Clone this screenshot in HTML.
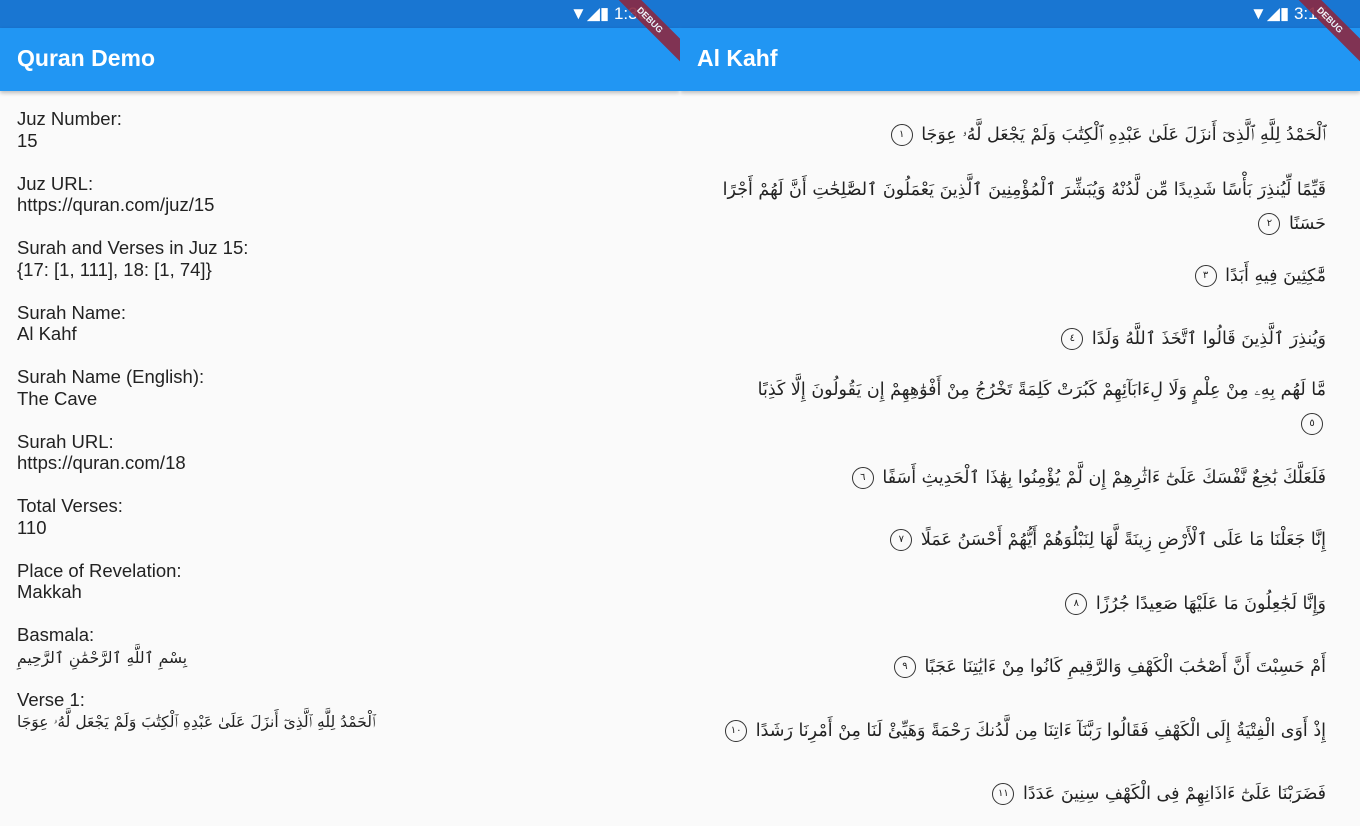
<!DOCTYPE html>
<html><head><meta charset="utf-8">
<style>
*{margin:0;padding:0;box-sizing:border-box}
body{width:1360px;height:826px;overflow:hidden;background:#fafafa;font-family:"Liberation Sans",sans-serif;position:relative}
.panel{position:absolute;top:0;width:680px;height:826px;overflow:hidden;background:#fafafa}
.sb{height:28px;background:#1976d2;position:relative}
.ab{height:63px;background:#2196f3;color:#fff;font-size:23px;font-weight:bold;padding:17px 0 0 17px;box-shadow:0 2px 4px rgba(0,0,0,.25);position:relative;z-index:2}
.icons{position:absolute;top:4px;color:#fff;font-size:17px}
.ribbon{position:absolute;top:12px;right:-30px;width:120px;height:16px;background:#8b2942;color:#fff;font-size:9px;font-weight:bold;text-align:center;line-height:16px;transform:rotate(45deg);z-index:5;opacity:.9}
.left{padding:17px 0 0 17px;color:#222;font-size:18.5px;line-height:21.5px}
.left .g{height:64.5px}
.ar{font-family:"DejaVu Sans",sans-serif;font-size:15.5px;direction:rtl;text-align:left;display:inline-block}
.right{position:absolute;top:91px;left:0;width:680px;direction:rtl;text-align:right;font-family:"DejaVu Sans",sans-serif;font-size:17.5px;color:#222}
.v{position:absolute;right:34px;left:0;line-height:34px;white-space:nowrap}
.m{display:inline-block;width:22px;height:22px;border:1.3px solid #333;border-radius:50%;font-size:10px;line-height:19px;text-align:center;vertical-align:middle;margin:0 3px}
</style></head><body>
<div class="panel" style="left:0">
<div class="sb"><div class="icons" style="left:570px">▼◢▮ 1:30</div></div>
<div class="ab">Quran Demo</div>
<div class="ribbon">DEBUG</div>
<div class="left">
<div class="g">Juz Number:<br>15</div>
<div class="g">Juz URL:<br>https://quran.com/juz/15</div>
<div class="g">Surah and Verses in Juz 15:<br>{17: [1, 111], 18: [1, 74]}</div>
<div class="g">Surah Name:<br>Al Kahf</div>
<div class="g">Surah Name (English):<br>The Cave</div>
<div class="g">Surah URL:<br>https://quran.com/18</div>
<div class="g">Total Verses:<br>110</div>
<div class="g">Place of Revelation:<br>Makkah</div>
<div class="g">Basmala:<br><span class="ar">بِسْمِ ٱللَّهِ ٱلرَّحْمَٰنِ ٱلرَّحِيمِ</span></div>
<div class="g">Verse 1:<br><span class="ar">ٱلْحَمْدُ لِلَّهِ ٱلَّذِىٓ أَنزَلَ عَلَىٰ عَبْدِهِ ٱلْكِتَٰبَ وَلَمْ يَجْعَل لَّهُۥ عِوَجَا</span></div>
</div>
</div>
<div class="panel" style="left:680px">
<div class="sb"><div class="icons" style="left:570px">▼◢▮ 3:15</div></div>
<div class="ab">Al Kahf</div>
<div class="ribbon">DEBUG</div>
<div class="right">
<div class="v" style="top:27px">ٱلْحَمْدُ لِلَّهِ ٱلَّذِىٓ أَنزَلَ عَلَىٰ عَبْدِهِ ٱلْكِتَٰبَ وَلَمْ يَجْعَل لَّهُۥ عِوَجَا <span class="m">١</span></div>
<div class="v" style="top:82px">قَيِّمًا لِّيُنذِرَ بَأْسًا شَدِيدًا مِّن لَّدُنْهُ وَيُبَشِّرَ ٱلْمُؤْمِنِينَ ٱلَّذِينَ يَعْمَلُونَ ٱلصَّٰلِحَٰتِ أَنَّ لَهُمْ أَجْرًا<br>حَسَنًا <span class="m">٢</span></div>
<div class="v" style="top:168px">مَّٰكِثِينَ فِيهِ أَبَدًا <span class="m">٣</span></div>
<div class="v" style="top:231px">وَيُنذِرَ ٱلَّذِينَ قَالُوا ٱتَّخَذَ ٱللَّهُ وَلَدًا <span class="m">٤</span></div>
<div class="v" style="top:282px">مَّا لَهُم بِهِۦ مِنْ عِلْمٍ وَلَا لِءَابَآئِهِمْ كَبُرَتْ كَلِمَةً تَخْرُجُ مِنْ أَفْوَٰهِهِمْ إِن يَقُولُونَ إِلَّا كَذِبًا<br><span class="m">٥</span></div>
<div class="v" style="top:370px">فَلَعَلَّكَ بَٰخِعٌ نَّفْسَكَ عَلَىٰٓ ءَاثَٰرِهِمْ إِن لَّمْ يُؤْمِنُوا بِهَٰذَا ٱلْحَدِيثِ أَسَفًا <span class="m">٦</span></div>
<div class="v" style="top:432px">إِنَّا جَعَلْنَا مَا عَلَى ٱلْأَرْضِ زِينَةً لَّهَا لِنَبْلُوَهُمْ أَيُّهُمْ أَحْسَنُ عَمَلًا <span class="m">٧</span></div>
<div class="v" style="top:496px">وَإِنَّا لَجَٰعِلُونَ مَا عَلَيْهَا صَعِيدًا جُرُزًا <span class="m">٨</span></div>
<div class="v" style="top:559px">أَمْ حَسِبْتَ أَنَّ أَصْحَٰبَ الْكَهْفِ وَالرَّقِيمِ كَانُوا مِنْ ءَايَٰتِنَا عَجَبًا <span class="m">٩</span></div>
<div class="v" style="top:623px">إِذْ أَوَى الْفِتْيَةُ إِلَى الْكَهْفِ فَقَالُوا رَبَّنَآ ءَاتِنَا مِن لَّدُنكَ رَحْمَةً وَهَيِّئْ لَنَا مِنْ أَمْرِنَا رَشَدًا <span class="m">١٠</span></div>
<div class="v" style="top:686px">فَضَرَبْنَا عَلَىٰٓ ءَاذَانِهِمْ فِى الْكَهْفِ سِنِينَ عَدَدًا <span class="m">١١</span></div>
</div>
</div>
</body></html>
